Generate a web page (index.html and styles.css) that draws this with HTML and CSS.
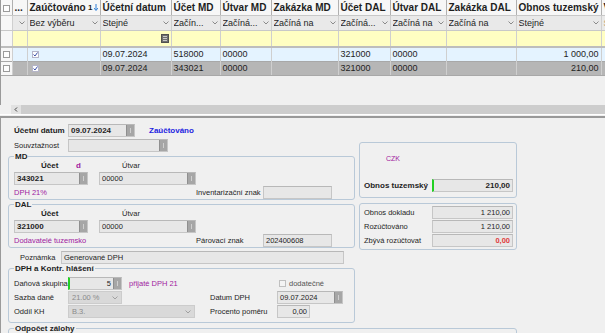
FILE: index.html
```html
<!DOCTYPE html>
<html lang="cs">
<head>
  <meta charset="UTF-8">
  <meta name="viewport" content="width=device-width, initial-scale=1.0">
  <title>Rozúčtování dokladu</title>
  <link rel="stylesheet" href="styles.css">
</head>
<body>
  <div class="grid">
    <table class="tbl">
      <colgroup>
        <col class="w11"><col class="w15"><col class="w73"><col class="w71"><col class="w49"><col class="w51">
        <col class="w67"><col class="w52"><col class="w56"><col class="w70"><col class="w85"><col class="w40">
      </colgroup>
      <tr class="hdr">
        <th class="c0"><span class="cb"></span></th>
        <th>...</th>
        <th><div class="hcell"><span>Zaúčtováno</span><span class="sort">1<svg width="4" height="7" viewBox="0 0 4 7"><path d="M2 0v6M0 4l2 2.5L4 4" stroke="#2f7fd8" stroke-width="1" fill="none"/></svg></span></div></th>
        <th>Účetní datum</th>
        <th>Účet MD</th>
        <th>Útvar MD</th>
        <th>Zakázka MD</th>
        <th>Účet DAL</th>
        <th>Útvar DAL</th>
        <th>Zakázka DAL</th>
        <th>Obnos tuzemský</th>
        <th>V</th>
      </tr>
      <tr class="flt">
        <td class="c0"></td>
        <td><div class="fc"><span></span><svg class="chev" width="6" height="4" viewBox="0 0 6 4"><path d="M0.5 0.5L3 3L5.5 0.5" stroke="#8a8a8a" fill="none"/></svg></div></td>
        <td><div class="fc"><span>Bez výběru</span><svg class="chev" width="6" height="4" viewBox="0 0 6 4"><path d="M0.5 0.5L3 3L5.5 0.5" stroke="#8a8a8a" fill="none"/></svg></div></td>
        <td><div class="fc"><span>Stejné</span><svg class="chev" width="6" height="4" viewBox="0 0 6 4"><path d="M0.5 0.5L3 3L5.5 0.5" stroke="#8a8a8a" fill="none"/></svg></div></td>
        <td><div class="fc"><span>Začín...</span><svg class="chev" width="6" height="4" viewBox="0 0 6 4"><path d="M0.5 0.5L3 3L5.5 0.5" stroke="#8a8a8a" fill="none"/></svg></div></td>
        <td><div class="fc"><span>Začíná...</span><svg class="chev" width="6" height="4" viewBox="0 0 6 4"><path d="M0.5 0.5L3 3L5.5 0.5" stroke="#8a8a8a" fill="none"/></svg></div></td>
        <td><div class="fc"><span>Začíná na</span><svg class="chev" width="6" height="4" viewBox="0 0 6 4"><path d="M0.5 0.5L3 3L5.5 0.5" stroke="#8a8a8a" fill="none"/></svg></div></td>
        <td><div class="fc"><span>Začíná...</span><svg class="chev" width="6" height="4" viewBox="0 0 6 4"><path d="M0.5 0.5L3 3L5.5 0.5" stroke="#8a8a8a" fill="none"/></svg></div></td>
        <td><div class="fc"><span>Začíná na</span><svg class="chev" width="6" height="4" viewBox="0 0 6 4"><path d="M0.5 0.5L3 3L5.5 0.5" stroke="#8a8a8a" fill="none"/></svg></div></td>
        <td><div class="fc"><span>Začíná na</span><svg class="chev" width="6" height="4" viewBox="0 0 6 4"><path d="M0.5 0.5L3 3L5.5 0.5" stroke="#8a8a8a" fill="none"/></svg></div></td>
        <td><div class="fc"><span>Stejné</span><svg class="chev" width="6" height="4" viewBox="0 0 6 4"><path d="M0.5 0.5L3 3L5.5 0.5" stroke="#8a8a8a" fill="none"/></svg></div></td>
        <td class="tan">Stejné</td>
      </tr>
      <tr class="yel">
        <td class="c0"></td><td></td><td></td>
        <td><div class="fc"><span></span><svg class="cal" width="8" height="9" viewBox="0 0 8 9"><rect x="0.5" y="0.5" width="7" height="8" fill="#6e6e6e" stroke="#505050"/><path d="M2 2.5h4M2 4.5h4M2 6.5h4" stroke="#c8c8c8"/></svg></div></td>
        <td></td><td></td><td></td><td></td><td></td><td></td><td></td><td></td>
      </tr>
      <tr class="r1">
        <td class="c0"><span class="cb"></span></td>
        <td></td>
        <td><span class="cb on"><svg width="5" height="5" viewBox="0 0 5 5"><path d="M0.5 2.5L2 4L4.5 0.5" stroke="#3a4ea8" fill="none"/></svg></span></td>
        <td>09.07.2024</td>
        <td>518000</td>
        <td>00000</td>
        <td></td>
        <td>321000</td>
        <td>00000</td>
        <td></td>
        <td class="num">1 000,00</td>
        <td></td>
      </tr>
      <tr class="r2">
        <td class="c0"><span class="cb"></span></td>
        <td></td>
        <td><span class="cb on"><svg width="5" height="5" viewBox="0 0 5 5"><path d="M0.5 2.5L2 4L4.5 0.5" stroke="#3a4ea8" fill="none"/></svg></span></td>
        <td>09.07.2024</td>
        <td>343021</td>
        <td>00000</td>
        <td></td>
        <td>321000</td>
        <td>00000</td>
        <td></td>
        <td class="num">210,00</td>
        <td></td>
      </tr>
    </table>
  </div>

  <div class="hscroll">
    <div class="hs-gap"></div>
    <div class="hs-btn"><svg width="4" height="5" viewBox="0 0 4 5"><path d="M3 0.5L1 2.5L3 4.5" stroke="#404040" fill="none"/></svg></div>
    <div class="hs-track"></div>
  </div>
  <div class="sep"></div>

  <div class="form">
    <div class="left">
      <div class="frow">
        <span class="lbl bold">Účetní datum</span>
        <div class="inp bold w67"><span class="val">09.07.2024</span><span class="spin"></span></div>
        <span class="status">Zaúčtováno</span>
      </div>
      <div class="frow gap2">
        <span class="lbl">Souvztažnost</span>
        <div class="inp w100"><span class="val"></span><span class="spin"></span></div>
      </div>

      <fieldset class="group">
        <legend>MD</legend>
        <div class="hrow">
          <span class="ucet">Účet</span><span class="flag">d</span><span>Útvar</span>
        </div>
        <div class="irow">
          <div class="inp bold w74"><span class="val">343021</span><span class="spin"></span></div>
          <div class="inp w97"><span class="val">00000</span><span class="spin"></span></div>
        </div>
        <div class="brow">
          <span class="note">DPH 21%</span>
          <span class="lbl2">Inventarizační znak</span>
          <div class="inp w69"></div>
        </div>
      </fieldset>

      <fieldset class="group gap2">
        <legend>DAL</legend>
        <div class="hrow">
          <span class="ucet">Účet</span><span class="flag"></span><span>Útvar</span>
        </div>
        <div class="irow">
          <div class="inp bold w74"><span class="val">321000</span><span class="spin"></span></div>
          <div class="inp w97"><span class="val">00000</span><span class="spin"></span></div>
        </div>
        <div class="brow">
          <span class="note">Dodavatelé tuzemsko</span>
          <span class="lbl2">Párovací znak</span>
          <div class="inp w69"><span class="val">202400608</span></div>
        </div>
      </fieldset>

      <div class="frow gap3">
        <span class="lbl-note">Poznámka</span>
        <div class="inp w283"><span class="val">Generované DPH</span></div>
      </div>

      <fieldset class="group dph">
        <legend>DPH a Kontr. hlášení</legend>
        <div class="drow first">
          <span class="dlbl">Daňová skupina</span>
          <div class="inp w54 mark"><span class="val right">5</span><span class="spin"></span></div>
          <span class="note tax">přijaté DPH 21</span>
          <label class="check"><span class="cb light"></span>dodatečné</label>
        </div>
        <div class="drow">
          <span class="dlbl">Sazba daně</span>
          <div class="sel w54"><span class="val">21.00 %</span><svg class="chev" width="6" height="4" viewBox="0 0 6 4"><path d="M0.5 0.5L3 3L5.5 0.5" stroke="#a0a0a0" fill="none"/></svg></div>
          <span class="sp88"></span>
          <span class="lbl2">Datum DPH</span>
          <div class="inp w66"><span class="val">09.07.2024</span><span class="spin"></span></div>
        </div>
        <div class="drow">
          <span class="dlbl">Oddíl KH</span>
          <div class="sel w127"><span class="val">B.3.</span><svg class="chev" width="6" height="4" viewBox="0 0 6 4"><path d="M0.5 0.5L3 3L5.5 0.5" stroke="#a0a0a0" fill="none"/></svg></div>
          <span class="sp15"></span>
          <span class="lbl2">Procento poměru</span>
          <div class="inp w33"><span class="val right">0,00</span></div>
        </div>
      </fieldset>
    </div>

    <div class="right">
      <div class="box czk">
        <div class="cur">CZK</div>
        <div class="trow">
          <span class="tlbl bold">Obnos tuzemský</span>
          <div class="inp mark bold w81"><span class="val right">210,00</span></div>
        </div>
      </div>
      <div class="box sums">
        <div class="trow">
          <span class="tlbl">Obnos dokladu</span>
          <div class="inp w81"><span class="val right">1 210,00</span></div>
        </div>
        <div class="trow">
          <span class="tlbl">Rozúčtováno</span>
          <div class="inp w81"><span class="val right">1 210,00</span></div>
        </div>
        <div class="trow">
          <span class="tlbl">Zbývá rozúčtovat</span>
          <div class="inp w81"><span class="val right red">0,00</span></div>
        </div>
      </div>
    </div>

    <fieldset class="group wide">
      <legend>Odpočet zálohy</legend>
    </fieldset>
  </div>
</body>
</html>
```

FILE: styles.css
```css
* {
  box-sizing: border-box;
}

body {
  margin: 0;
  width: 605px;
  height: 333px;
  overflow: hidden;
  background: #f0f0f0;
  font-family: 'Liberation Sans', Arial, sans-serif;
  font-size: 7.5px;
  color: #1e1e1e;
}

.bold {
  font-weight: bold;
  font-size: 8px;
}

/* grid */

.grid {
  height: 105px;
  overflow: hidden;
  border-left: 1px solid #9a9a9a;
  background: #f0f0f0;
}

.tbl {
  width: 640px;
  table-layout: fixed;
  border-collapse: collapse;
  font-size: 9px;
}

.w11 { width: 11px; }
.w15 { width: 15px; }
.w73 { width: 73px; }
.w71 { width: 71px; }
.w49 { width: 49px; }
.w51 { width: 51px; }
.w67 { width: 67px; }
.w52 { width: 52px; }
.w56 { width: 56px; }
.w70 { width: 70px; }
.w85 { width: 85px; }
.w40 { width: 40px; }

.tbl th,
.tbl td {
  padding: 0 2px;
  white-space: nowrap;
  overflow: hidden;
  text-align: left;
  border-right: 1px solid #cfcfcf;
}

.tbl th {
  height: 15px;
  background: #f7f7f7;
  font-size: 10px;
  border-right-color: #b0b0b0;
  border-bottom: 1px solid #c8c8c8;
}

.hcell {
  display: flex;
  justify-content: space-between;
  align-items: center;
}

.sort {
  display: flex;
  align-items: center;
  gap: 1px;
  font-size: 8px;
}

.flt td {
  height: 15px;
  background: #e9e9e9;
  border-bottom: 1px solid #c8c8c8;
}

.fc {
  display: flex;
  justify-content: space-between;
  align-items: center;
}

.fc span {
  overflow: hidden;
}

.chev {
  flex-shrink: 0;
}

.tan {
  color: #c0a070;
}

.yel td {
  height: 17px;
  background: #fffec2;
  border-bottom: 2px solid #bdbdbd;
}

.r1 td {
  height: 14px;
  background: #e4f3ff;
}

.r2 td {
  height: 14px;
  background: #b6b6b6;
  border-top: 1px solid #a8a8a8;
  border-bottom: 1px solid #a8a8a8;
}

.tbl .c0 {
  background: #f7f7f7;
  padding: 0 0 0 2px;
}

.num {
  text-align: right !important;
}

.cb {
  display: inline-flex;
  align-items: center;
  justify-content: center;
  width: 7px;
  height: 7px;
  border: 1px solid #9a9a9a;
  background: #fdfdfd;
  vertical-align: middle;
}

.cb.on {
  margin-left: 2px;
  border-color: #b4b4c8;
}

/* scroll + splitter */

.hscroll {
  display: flex;
  height: 9px;
}

.hs-gap {
  width: 11px;
}

.hs-btn {
  width: 10px;
  display: flex;
  align-items: center;
  justify-content: center;
  background: #e2e2e2;
}

.hs-track {
  flex: 1;
  background: #cdcdcd;
}

.sep {
  height: 4px;
  border-top: 1px solid #ffffff;
  border-bottom: 2px solid #999999;
}

/* form */

.form {
  display: grid;
  grid-template-columns: 347px 158px;
  column-gap: 4px;
  padding: 6px 0 0 7px;
  border-left: 1px solid #9a9a9a;
  height: 215px;
  white-space: nowrap;
}

.frow {
  display: flex;
  align-items: center;
  height: 13px;
}

.gap2 {
  margin-top: 2px;
}

.gap3 {
  margin-top: 3px;
}

.lbl {
  width: 60px;
  padding-left: 6px;
}

.lbl-note {
  width: 53px;
  padding-left: 12px;
}

.status {
  margin-left: 14px;
  color: #2323e0;
  font-weight: bold;
  font-size: 8px;
}

.inp {
  display: flex;
  align-items: stretch;
  height: 13px;
  background: #e7e7e7;
  border: 1px solid #c6c6c6;
  border-top-color: #b8b8b8;
}

.inp .val {
  flex: 1;
  display: flex;
  align-items: center;
  padding: 0 2px;
  overflow: hidden;
}

.val.right {
  justify-content: flex-end;
}

.red {
  color: #e03c3c;
  font-weight: bold;
}

.inp.mark {
  border-left: 2px solid #22d022;
}

.spin {
  width: 8px;
  background: #a6a6a6;
  border-left: 1px solid #8f8f8f;
  position: relative;
}

.spin::after {
  content: '';
  position: absolute;
  left: 3px;
  top: 3px;
  width: 1px;
  height: 5px;
  background: #cfcfcf;
}

.w33 { width: 33px; }
.w54 { width: 54px; }
.w66 { width: 66px; }
.w69 { width: 69px; }
.w74 { width: 74px; }
.w81 { width: 81px; }
.w97 { width: 97px; }
.w100 { width: 100px; }
.w127 { width: 127px; }
.w283 { width: 283px; }

.inp.w67 {
  width: 67px;
}

.group {
  margin: 0;
  padding: 0 5px;
  border: 1px solid #b9c9d8;
  border-radius: 3px;
  min-width: 0;
}

.group legend {
  padding: 0 1px;
  font-weight: bold;
  font-size: 8px;
  line-height: 9px;
}

.hrow {
  display: flex;
  height: 8px;
  align-items: center;
  margin-bottom: 3px;
}

.ucet {
  width: 62px;
  padding-left: 27px;
  font-weight: bold;
  font-size: 8px;
}

.flag {
  width: 46px;
  color: #a020a0;
  font-weight: bold;
  font-size: 8px;
}

.irow {
  display: flex;
  gap: 11px;
}

.brow {
  display: flex;
  align-items: center;
  height: 13px;
  margin-top: 1px;
}

.brow .note {
  width: 182px;
}

.note {
  color: #a020a0;
}

.lbl2 {
  width: 67px;
}

.dph {
  padding-bottom: 4px;
}

.drow {
  display: flex;
  align-items: center;
  height: 13px;
  margin-top: 1px;
}

.drow.first {
  margin-top: 4px;
}

.dlbl {
  width: 54px;
}

.tax {
  margin-left: 7px;
  width: 150px;
}

.check {
  display: flex;
  align-items: center;
  gap: 3px;
  color: #555;
}

.cb.light {
  border-color: #c0c0c0;
  background: #f4f4f4;
}

.sel {
  display: flex;
  align-items: center;
  height: 13px;
  padding-right: 3px;
  background: #d9d9d9;
  border: 1px solid #cccccc;
  color: #8a8a8a;
}

.sel .val {
  flex: 1;
  padding: 0 3px;
}

.sp88 { width: 88px; }
.sp15 { width: 15px; }

.box {
  border: 1px solid #b9c9d8;
  border-radius: 3px;
  padding-left: 4px;
  padding-right: 3px;
}

.czk {
  margin-top: 18px;
  height: 56px;
  padding-top: 12px;
}

.cur {
  height: 8px;
  padding-left: 22px;
  color: #a020a0;
  font-size: 7px;
}

.czk .trow {
  margin-top: 16px;
}

.trow {
  display: flex;
  align-items: center;
  height: 13px;
}

.tlbl {
  width: 68px;
}

.sums {
  margin-top: 5px;
  padding-top: 2px;
  padding-bottom: 2px;
  display: flex;
  flex-direction: column;
  gap: 1px;
}

.wide {
  grid-column: 1 / 3;
  margin-top: 1px;
  height: 20px;
}
```
